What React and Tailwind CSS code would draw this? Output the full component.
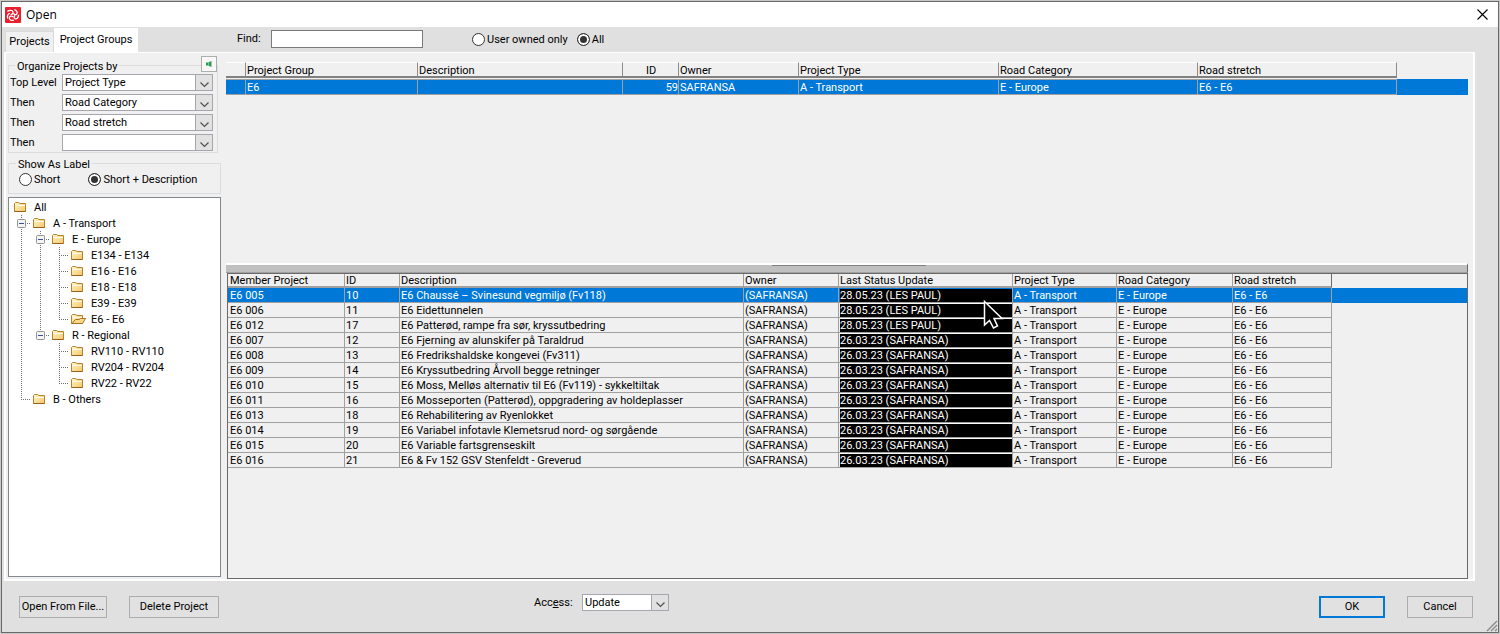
import React from 'react';

const groupColumns = [
  { label: '', width: 'w-5' },
  { label: 'Project Group', width: 'w-[172px]' },
  { label: 'Description', width: 'w-[205px]' },
  { label: 'ID', width: 'w-14' },
  { label: 'Owner', width: 'w-[120px]' },
  { label: 'Project Type', width: 'w-[200px]' },
  { label: 'Road Category', width: 'w-[199px]' },
  { label: 'Road stretch', width: 'w-[199px]' },
];

const groupRow = ['', 'E6', '', '59', 'SAFRANSA', 'A - Transport', 'E - Europe', 'E6 - E6'];

const memberColumns = [
  { label: 'Member Project', width: 'w-[117px]' },
  { label: 'ID', width: 'w-[55px]' },
  { label: 'Description', width: 'w-[344px]' },
  { label: 'Owner', width: 'w-[95px]' },
  { label: 'Last Status Update', width: 'w-[174px]' },
  { label: 'Project Type', width: 'w-[104px]' },
  { label: 'Road Category', width: 'w-[116px]' },
  { label: 'Road stretch', width: 'w-[99px]' },
];

const members = [
  { name: 'E6 005', id: 10, description: 'E6 Chaussé – Svinesund vegmiljø (Fv118)', status: '28.05.23 (LES PAUL)' },
  { name: 'E6 006', id: 11, description: 'E6 Eidettunnelen', status: '28.05.23 (LES PAUL)' },
  { name: 'E6 012', id: 17, description: 'E6 Patterød, rampe fra sør, kryssutbedring', status: '28.05.23 (LES PAUL)' },
  { name: 'E6 007', id: 12, description: 'E6 Fjerning av alunskifer på Taraldrud', status: '26.03.23 (SAFRANSA)' },
  { name: 'E6 008', id: 13, description: 'E6 Fredrikshaldske kongevei (Fv311)', status: '26.03.23 (SAFRANSA)' },
  { name: 'E6 009', id: 14, description: 'E6 Kryssutbedring Årvoll begge retninger', status: '26.03.23 (SAFRANSA)' },
  { name: 'E6 010', id: 15, description: 'E6 Moss, Melløs alternativ til E6 (Fv119) - sykkeltiltak', status: '26.03.23 (SAFRANSA)' },
  { name: 'E6 011', id: 16, description: 'E6 Mosseporten (Patterød), oppgradering av holdeplasser', status: '26.03.23 (SAFRANSA)' },
  { name: 'E6 013', id: 18, description: 'E6 Rehabilitering av Ryenlokket', status: '26.03.23 (SAFRANSA)' },
  { name: 'E6 014', id: 19, description: 'E6 Variabel infotavle Klemetsrud nord- og sørgående', status: '26.03.23 (SAFRANSA)' },
  { name: 'E6 015', id: 20, description: 'E6 Variable fartsgrenseskilt', status: '26.03.23 (SAFRANSA)' },
  { name: 'E6 016', id: 21, description: 'E6 & Fv 152 GSV Stenfeldt - Greverud', status: '26.03.23 (SAFRANSA)' },
];

// guides: one entry per indent level
const tree = [
  { label: 'All', guides: [] },
  { label: 'A - Transport', guides: ['box'] },
  { label: 'E - Europe', guides: ['line', 'box'] },
  { label: 'E134 - E134', guides: ['line', 'line', 'tee'] },
  { label: 'E16 - E16', guides: ['line', 'line', 'tee'] },
  { label: 'E18 - E18', guides: ['line', 'line', 'tee'] },
  { label: 'E39 - E39', guides: ['line', 'line', 'tee'] },
  { label: 'E6 - E6', guides: ['line', 'line', 'elbow'], open: true },
  { label: 'R - Regional', guides: ['line', 'boxEnd'] },
  { label: 'RV110 - RV110', guides: ['line', 'blank', 'tee'] },
  { label: 'RV204 - RV204', guides: ['line', 'blank', 'tee'] },
  { label: 'RV22 - RV22', guides: ['line', 'blank', 'elbow'] },
  { label: 'B - Others', guides: ['elbow'] },
];

const organizeLevels = [
  { label: 'Top Level', value: 'Project Type' },
  { label: 'Then', value: 'Road Category' },
  { label: 'Then', value: 'Road stretch' },
  { label: 'Then', value: '' },
];

const Guide = ({ type }) => {
  const isBox = type === 'box' || type === 'boxEnd';
  const ends = type === 'elbow' || type === 'boxEnd';
  return (
    <svg width="19" height="16" viewBox="0 0 19 16" className="shrink-0">
      {type !== 'blank' && (
        <path d={ends ? 'M9.5 0V9' : 'M9.5 0V16'} stroke="#707070" strokeDasharray="1 1" fill="none" />
      )}
      {type !== 'blank' && type !== 'line' && (
        <path d="M9 8.5H20" stroke="#707070" strokeDasharray="1 1" fill="none" />
      )}
      {isBox && (
        <>
          <rect x="5.5" y="4.5" width="8" height="8" rx="1" fill="#f4f4f4" stroke="#919191" />
          <path d="M7 8.5H12" stroke="#3c50a0" />
        </>
      )}
    </svg>
  );
};

const Folder = ({ open }) => (
  <svg width="17" height="14" viewBox="0 0 17 14" className="shrink-0">
    <defs>
      <linearGradient id="folderFill" x1="0" y1="0" x2="1" y2="1">
        <stop offset="0" stopColor="#fff6cf" />
        <stop offset="1" stopColor="#f5c766" />
      </linearGradient>
    </defs>
    <path d="M0.5 11.5V3.5L1.5 2.5H4.5L6 3.5H11.5V11.5Z" fill="url(#folderFill)" stroke="#b9812c" />
    <path d="M1.5 5.5H11" stroke="#fffbe6" />
    <path d="M0.5 11.5H11.5" stroke="#94601a" />
    {open && <path d="M1 11.5L4.5 7.5H8L9.5 6.5H14.5L11.5 11.5Z" fill="#fbd987" stroke="#a8701f" />}
  </svg>
);

const Dropdown = ({ id, value, className }) => (
  <div className={`relative h-[17px] ${className}`}>
    <select
      id={id}
      defaultValue={value}
      className="block h-full w-full appearance-none border border-[#a5a6ae] bg-white pl-0.5 leading-[15px] outline-none"
    >
      <option value={value}>{value}</option>
    </select>
    <span className="pointer-events-none absolute inset-y-0 right-0 flex w-[18px] items-center justify-center border border-[#a5a6ae] bg-[#e1e1e1]">
      <svg width="9" height="6" viewBox="0 0 9 6" className="mt-1">
        <path d="M0.5 0.5L4.5 4.5L8.5 0.5" fill="none" stroke="#505050" strokeWidth="1.2" />
      </svg>
    </span>
  </div>
);

const Radio = ({ name, label, checked }) => (
  <label className="flex items-center gap-0.5 whitespace-nowrap">
    <input
      type="radio"
      name={name}
      defaultChecked={checked}
      className="h-[13px] w-[13px] appearance-none rounded-full border border-[#333] bg-white checked:bg-[#333] checked:shadow-[inset_0_0_0_2px_#fff]"
    />
    <span className="pt-px">{label}</span>
  </label>
);

const PushButton = ({ children, className }) => (
  <button type="button" className={`h-[22px] bg-[#e1e1e1] pt-px text-center whitespace-nowrap ${className}`}>
    {children}
  </button>
);

const Pointer = () => (
  <svg width="21" height="30" viewBox="0 0 21 30" className="absolute top-3 left-[144px] z-10">
    <path
      d="M1.5 1.5V25L6.5 20.5L10.5 28L14.5 26L11 18.5H19Z"
      fill="#000"
      stroke="#fff"
      strokeWidth="1.5"
    />
  </svg>
);

const TitleBar = () => (
  <header className="flex h-[25px] shrink-0 items-center bg-white pr-2 pl-[3px]">
    <svg width="16" height="16" viewBox="0 0 16 16">
      <rect width="16" height="16" rx="1" fill="#e8212f" />
      <g fill="none" stroke="#fff" strokeWidth="1.3">
        <path d="M2.4 4.6C4.4 2.8 7.4 3.2 8 5C8.3 6.4 7.2 7.4 5.6 7.6" />
        <path d="M9.4 2.6C12 3.4 12.8 5.6 11.6 7.2C10.6 8.2 9.2 7.6 8.4 6.4" />
        <path d="M13.6 7.8C13.6 10.6 11.8 12.4 10 11.6C8.6 10.8 8.8 9.2 10.2 8.4" />
        <path d="M8.8 13.2C6.4 14 4 12.6 4.4 10.6C4.8 9 6.6 8.8 8.2 9.8" />
        <path d="M2.8 11.4C1.8 9.2 2.8 7 4.8 6.4" />
      </g>
    </svg>
    <h1 className="flex-1 pl-[5px] font-['Open_Sans',sans-serif] text-xs">Open</h1>
    <button type="button" aria-label="Close" className="p-0.5">
      <svg width="11" height="11" viewBox="0 0 11 11">
        <path d="M0.5 0.5L10.5 10.5M10.5 0.5L0.5 10.5" stroke="#000" strokeWidth="1.1" />
      </svg>
    </button>
  </header>
);

const Sidebar = () => (
  <aside className="mb-0.5 flex w-[213px] shrink-0 flex-col">
    <section className="relative mt-3 mr-[3px] h-[88px] border border-[#dcdcdc] pt-2">
      <h2 className="absolute -top-[7px] left-1.5 bg-[#f0f0f0] px-0.5">Organize Projects by</h2>
      <button
        type="button"
        aria-label="Apply"
        className="absolute -top-2.5 right-0 flex h-4 w-4 items-center justify-center border border-[#adadad] bg-[#f8f8f8]"
      >
        <svg width="6" height="6" viewBox="0 0 6 6">
          <path d="M0 1.5H2L5.5 0V6L2 4.5H0Z" fill="#2e9c57" />
          <path d="M2.5 1V5" stroke="#8fd0a6" strokeWidth="0.8" />
        </svg>
      </button>
      <div className="flex flex-col gap-[3px] pr-1">
        {organizeLevels.map((level, i) => (
          <div key={i} className="flex h-[17px] items-center">
            <label htmlFor={`level-${i}`} className="w-[53px] pt-px pl-px whitespace-nowrap">
              {level.label}
            </label>
            <Dropdown id={`level-${i}`} value={level.value} className="flex-1" />
          </div>
        ))}
      </div>
    </section>

    <section className="relative mt-2.5 h-[31px] border border-[#dcdcdc]">
      <h2 className="absolute -top-[7px] left-[7px] bg-[#f0f0f0] px-0.5">Show As Label</h2>
      <div className="flex h-full items-center gap-7 pt-0.5 pl-2.5">
        <Radio name="label" label="Short" />
        <Radio name="label" label="Short + Description" checked />
      </div>
    </section>

    <ul className="mt-[3px] flex-1 border border-[#828790] bg-white pt-px pl-[3px]">
      {tree.map((node) => (
        <li key={node.label} className="flex h-4 items-center">
          {node.guides.map((type, i) => (
            <Guide key={i} type={type} />
          ))}
          <span className="flex items-center gap-[3px] pl-0.5 whitespace-nowrap">
            <Folder open={node.open} />
            <span className="pt-0.5">{node.label}</span>
          </span>
        </li>
      ))}
    </ul>
  </aside>
);

const GroupTable = () => (
  <table className="w-full table-fixed border-separate border-spacing-0 text-left">
    <colgroup>
      {groupColumns.map((col) => (
        <col key={col.label} className={col.width} />
      ))}
      <col />
    </colgroup>
    <thead>
      <tr className="h-4">
        {groupColumns.map((col) => (
          <th
            key={col.label}
            className={`border-t border-r border-b-2 border-t-white border-r-[#8c8c8c] border-b-[#808080] p-0 pt-0.5 pl-px leading-[11px] font-normal ${
              col.label === 'ID' ? 'text-center' : ''
            }`}
          >
            {col.label}
          </th>
        ))}
        <td className="p-0" />
      </tr>
    </thead>
    <tbody>
      <tr className="h-px">
        <td className="h-px p-0" colSpan={9} />
      </tr>
      <tr className="h-4 bg-[#0078d7] text-white">
        {groupRow.map((text, i) => (
          <td
            key={i}
            className={`border-y border-r border-[#a0a0a0] p-0 pt-0.5 leading-3 whitespace-nowrap ${
              i === 3 ? 'text-right' : 'pl-px'
            }`}
          >
            {text}
          </td>
        ))}
        <td className="p-0" />
      </tr>
    </tbody>
  </table>
);

const MemberTable = () => (
  <table className="w-full table-fixed border-separate border-spacing-0 text-left">
    <colgroup>
      {memberColumns.map((col) => (
        <col key={col.label} className={col.width} />
      ))}
      <col />
    </colgroup>
    <thead>
      <tr className="h-3.5">
        {memberColumns.map((col) => (
          <th
            key={col.label}
            className="border-r border-b-2 border-[#a0a0a0] p-0 pt-px pl-px leading-[11px] font-normal whitespace-nowrap first:pl-0.5 last-of-type:border-r-[#696969]"
          >
            {col.label}
          </th>
        ))}
        <td className="p-0" />
      </tr>
    </thead>
    <tbody>
      {members.map((m, row) => {
        const cell = 'border-r border-b border-[#a0a0a0] p-0 pt-0.5 pl-px leading-3 whitespace-nowrap first:pl-0.5';
        return (
          <tr key={m.name} className={row === 0 ? 'h-[15px] bg-[#0078d7] text-white' : 'h-[15px]'}>
            <td className={cell}>{m.name}</td>
            <td className={cell}>{m.id}</td>
            <td className={cell}>{m.description}</td>
            <td className={cell}>(SAFRANSA)</td>
            <td className="relative border-r border-b border-[#a0a0a0] p-0 pl-px whitespace-nowrap text-white">
              <div
                className={`border-t bg-black pt-px leading-3 ${row === 0 ? 'border-[#0078d7]' : 'border-white'}`}
              >
                {m.status}
              </div>
              {row === 0 && <Pointer />}
            </td>
            <td className={cell}>A - Transport</td>
            <td className={cell}>E - Europe</td>
            <td className={cell}>E6 - E6</td>
            <td className="p-0" />
          </tr>
        );
      })}
    </tbody>
  </table>
);

const App = () => {
  return (
    <div className="flex min-h-screen flex-col border border-[#c8c8c8] bg-[#e0e0e0] font-['Roboto','Liberation_Sans',sans-serif] text-[11px] leading-4 text-black">
      <div className="flex flex-1 flex-col border border-[#696969]">
        <TitleBar />

        {/* Tabs and search */}
        <div className="flex h-[25px] shrink-0 items-end pl-[3px]">
          <nav className="flex w-[229px] items-end" role="tablist">
            <button
              type="button"
              role="tab"
              className="h-[21px] w-[49px] border border-b-0 border-[#dadada] bg-[#f0f0f0] text-center"
            >
              Projects
            </button>
            <button
              type="button"
              role="tab"
              aria-selected="true"
              className="h-6 w-[84px] bg-white text-center whitespace-nowrap"
            >
              Project Groups
            </button>
          </nav>
          <div className="flex h-full flex-1 items-center pb-px">
            <label htmlFor="find" className="w-[37px] pl-[3px]">
              Find:
            </label>
            <input id="find" type="text" className="mr-[49px] h-[18px] w-[152px] border border-[#7a7a7a] bg-white px-1" />
            <div className="flex gap-[9px]">
              <Radio name="owner" label="User owned only" />
              <Radio name="owner" label="All" checked />
            </div>
          </div>
        </div>

        {/* Panel */}
        <main className="mr-[23px] ml-0.5 flex flex-1 gap-[5px] border-2 border-t border-white bg-[#f0f0f0] pr-[5px] pl-0.5">
          <Sidebar />
          <div className="flex min-w-0 flex-1 flex-col pt-[9px]">
            <div className="h-[201px]">
              <GroupTable />
            </div>
            <div className="h-2.5 shrink-0 border-t-2 border-r border-b border-t-white border-r-[#696969] border-b-[#a0a0a0] bg-[#c0c0c0]">
              <div className="ml-[546px] h-px w-[154px] bg-[#808080]" />
            </div>
            <div className="ml-px flex-1 border border-[#696969]">
              <MemberTable />
            </div>
          </div>
        </main>

        {/* Footer */}
        <footer className="flex h-[51px] shrink-0 items-center pl-[17px]">
          <PushButton className="w-[88px] border border-[#adadad]">Open From File...</PushButton>
          <PushButton className="ml-[22px] w-[90px] border border-[#adadad]">Delete Project</PushButton>
          <div className="mb-2 ml-[315px] flex flex-1 items-center">
            <label htmlFor="access" className="w-12 pt-px">
              Acc<u>e</u>ss:
            </label>
            <Dropdown id="access" value="Update" className="w-[87px]" />
          </div>
          <PushButton className="w-[66px] border-2 border-[#0078d7]">OK</PushButton>
          <PushButton className="ml-[22px] w-[66px] border border-[#adadad]">Cancel</PushButton>
          <svg width="12" height="12" viewBox="0 0 12 12" className="ml-[13px] self-end">
            <path d="M1 11L11 1M5 11L11 5M9 11L11 9" stroke="#8a8a8a" strokeWidth="1.4" />
          </svg>
        </footer>
      </div>
    </div>
  );
};

export default App;
